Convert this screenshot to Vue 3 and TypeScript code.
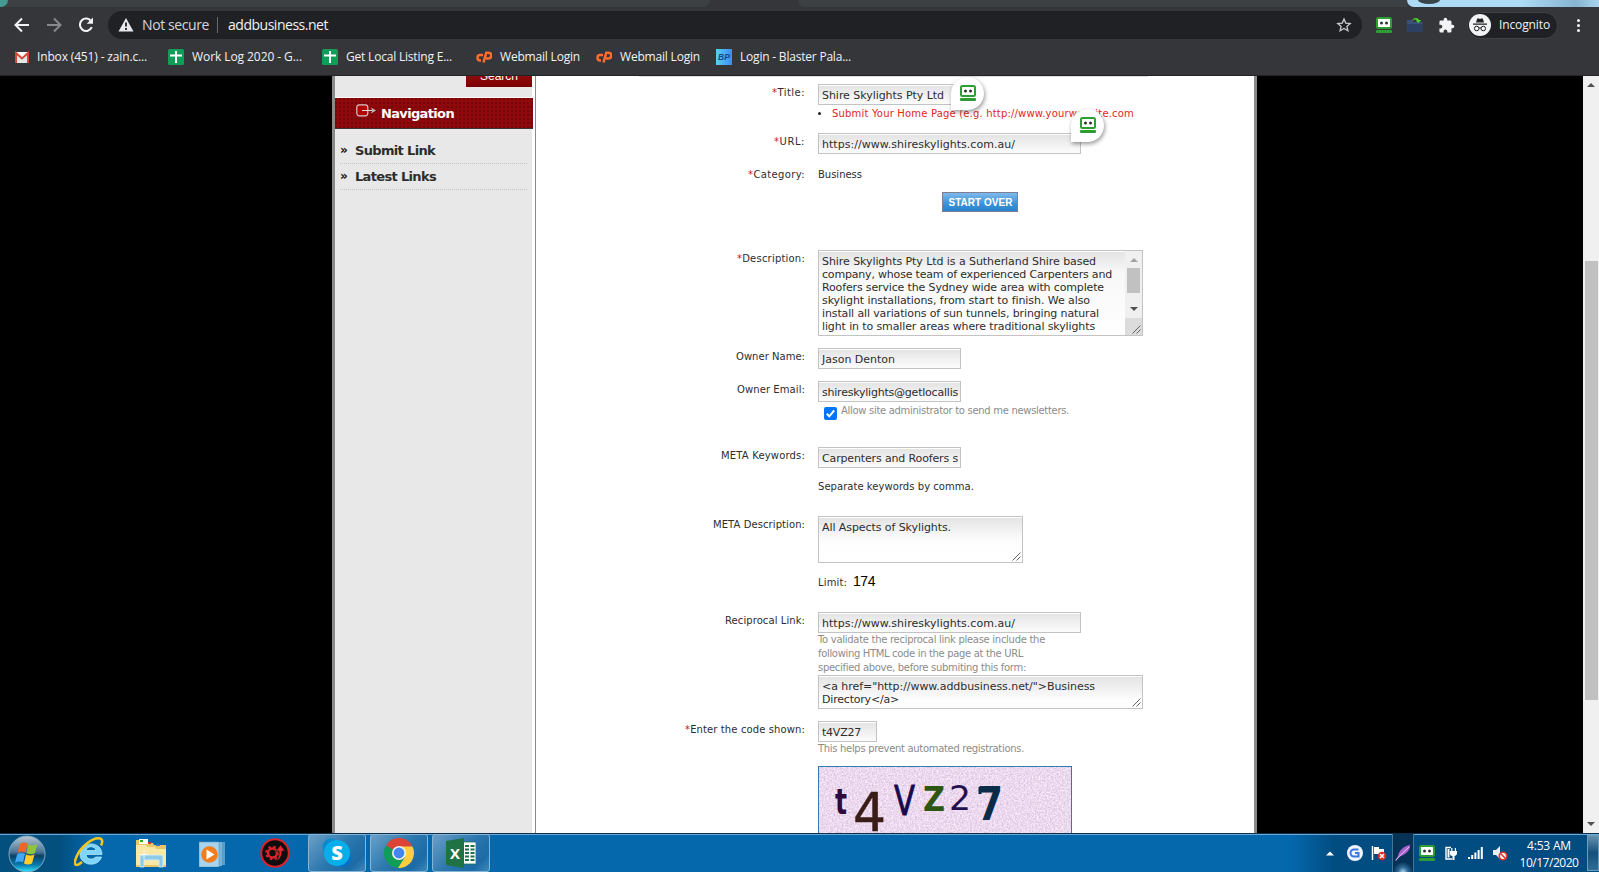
<script setup lang="ts">
import type { Directive } from 'vue'

// Spreads a line of text over a given width by adjusting its tracking.
const vFit: Directive<HTMLElement, number> = {
  mounted(el, { value }) {
    const count = (el.textContent ?? '').length
    const width = el.getBoundingClientRect().width
    if (count > 1 && value) el.style.letterSpacing = `${(value - width) / count}px`
  },
}

interface Bookmark { kind: string; text: string; fit: number }
const bookmarks: Bookmark[] = [
  { kind: 'gmail', text: 'Inbox (451) - zain.c...', fit: 110 },
  { kind: 'sheet', text: 'Work Log 2020 - G...', fit: 110 },
  { kind: 'sheet', text: 'Get Local Listing E...', fit: 106 },
  { kind: 'cp', text: 'Webmail Login', fit: 80 },
  { kind: 'cp', text: 'Webmail Login', fit: 80 },
  { kind: 'bp', text: 'Login - Blaster Pala...', fit: 111 },
]

interface Line { text: string; fit: number }
const description: Line[] = [
  { text: 'Shire Skylights Pty Ltd is a Sutherland Shire based', fit: 274 },
  { text: 'company, whose team of experienced Carpenters and', fit: 290 },
  { text: 'Roofers service the Sydney wide area with complete', fit: 282 },
  { text: 'skylight installations, from start to finish. We also', fit: 268 },
  { text: 'install all variations of sun tunnels, bringing natural', fit: 277 },
  { text: 'light in to smaller areas where traditional skylights', fit: 273 },
  { text: 'can be a hidden cost and reach the choice of double', fit: 284 },
]
const hints: Line[] = [
  { text: 'To validate the reciprocal link please include the', fit: 227 },
  { text: 'following HTML code in the page at the URL', fit: 205 },
  { text: 'specified above, before submiting this form:', fit: 208 },
]
const code: Line[] = [
  { text: '<a href="http://www.addbusiness.net/">Business', fit: 273 },
  { text: 'Directory</a>', fit: 77 },
]
</script>

<template>
  <div class="screen">
    <svg class="defs" width="0" height="0">
      <symbol id="robo" viewBox="0 0 16 16">
        <rect x="1" y="1" width="14" height="10" rx="1.5" fill="#fff" stroke="#2f9e32" stroke-width="2" />
        <circle cx="5.5" cy="6" r="1.5" fill="#333" /><circle cx="10.5" cy="6" r="1.5" fill="#333" />
        <rect x="0" y="13" width="16" height="3" rx="1" fill="#2f9e32" />
      </symbol>
      <symbol id="grip" viewBox="0 0 9 9">
        <path d="M.5 8.500 8.500.5M4.500 8.500l4-4" stroke="#555" fill="none" stroke-width=".9" />
      </symbol>
    </svg>

    <header class="browser">
      <div class="tabs">
        <div class="group left"><i class="teal" /></div>
        <div class="group mid" />
        <div class="glass"><i class="knob" /></div>
      </div>
      <div class="toolbar">
        <svg class="nav" viewBox="0 0 108 28" width="108" height="28">
          <path d="M29 14H16M22 7.500 15.500 14l6.500 6.500" stroke="#f1f3f4" stroke-width="2" fill="none" />
          <path d="M47 14h13M54 7.500 60.500 14 54 20.500" stroke="#88898c" stroke-width="2" fill="none" />
          <path d="M91.300 10.300A6.200 6.200 0 1 0 91.800 16.200" stroke="#f1f3f4" stroke-width="2.100" fill="none" />
          <path d="M93 6.500v6.300h-6.300z" fill="#f1f3f4" />
        </svg>
        <div class="omnibox">
          <svg class="warn" viewBox="0 0 16 14" width="16" height="14">
            <path d="M8 0 15.500 13.500H.5z" fill="#e8eaed" /><path d="M8 4.500v4M8 10v2" stroke="#202124" stroke-width="1.800" />
          </svg>
          <span class="secure"><span v-fit="67">Not secure</span></span>
          <i class="bar" />
          <span class="address"><span v-fit="100">addbusiness.net</span></span>
          <svg class="star" viewBox="0 0 16 16" width="16" height="16">
            <path d="M8 2l1.800 4.100 4.400.4-3.300 2.900 1 4.300L8 11.400l-3.900 2.300 1-4.300L1.800 6.500l4.400-.4z" stroke="#c9cacd" stroke-width="1.300" fill="none" />
          </svg>
        </div>
        <svg class="ext robo" width="16" height="16"><use href="#robo" /></svg>
        <svg class="ext" viewBox="0 0 16 16" width="16" height="16">
          <path d="M0 3h5l1 2h9.500v10H.5z" fill="#3b5078" /><path d="M.5 7h15v8H.5z" fill="#2d3f63" />
          <path d="M4.500 4.500C6 0 11 0 12 3h2.300L11.500 6 8.500 3.500H10C9 2 6.500 2.200 4.500 4.500z" fill="#4fd130" />
        </svg>
        <svg class="ext" viewBox="0 0 24 24" width="17" height="17">
          <path fill="#f1f3f4" d="M20.500 11H19V7a2 2 0 0 0-2-2h-4V3.500a2.500 2.500 0 0 0-5 0V5H4a2 2 0 0 0-2 2v3.800h1.500a2.700 2.700 0 0 1 0 5.400H2V20a2 2 0 0 0 2 2h3.800v-1.500a2.700 2.700 0 0 1 5.400 0V22H17a2 2 0 0 0 2-2v-4h1.500a2.500 2.500 0 0 0 0-5z" />
        </svg>
        <div class="profile">
          <svg viewBox="0 0 22 22" width="22" height="22">
            <circle cx="11" cy="11" r="11" fill="#f1f3f4" />
            <path d="M7 8.500 8.200 4.500h1.600l1.200.5 1.200-.5h1.600L15 8.500zM4 9.500h14v1.200H4z" fill="#202124" />
            <circle cx="7.700" cy="14.500" r="2.300" fill="none" stroke="#202124" /><circle cx="14.300" cy="14.500" r="2.300" fill="none" stroke="#202124" />
            <path d="M10 14.200q1-.8 2 0" stroke="#202124" fill="none" />
          </svg>
          <span class="who"><span v-fit="51">Incognito</span></span>
        </div>
        <div class="dots"><i /><i /><i /></div>
      </div>
      <nav class="bookmarks">
        <div v-for="(b, i) in bookmarks" :key="i" :class="['bookmark', 'b' + i]">
          <svg v-if="b.kind === 'gmail'" viewBox="0 0 16 16" width="16" height="16">
            <path d="M1 3h14v11H1z" fill="#e6e6e6" /><path d="M1 3h14L8 9z" fill="#fff" /><path d="M2 14V4l6 5.500L14 4v10" fill="none" stroke="#db4437" stroke-width="2" />
          </svg>
          <svg v-else-if="b.kind === 'sheet'" viewBox="0 0 16 16" width="16" height="16">
            <rect width="16" height="16" rx="1.500" fill="#0f9d58" /><path d="M2 6.500h12M8 2v12" stroke="#fff" stroke-width="2" />
          </svg>
          <svg v-else-if="b.kind === 'cp'" viewBox="0 0 16 16" width="16" height="16">
            <path d="M7 6H4.200a2.700 2.700 0 0 0 0 5.400H5M7.500 13.500l2.700-9.700h2.300a2.500 2.500 0 0 1 0 5.600H10" fill="none" stroke="#ff6c2c" stroke-width="2.500" />
          </svg>
          <svg v-else viewBox="0 0 16 16" width="16" height="16">
            <linearGradient id="bpg"><stop stop-color="#59d0ee" /><stop offset="1" stop-color="#3c8ef5" /></linearGradient>
            <rect width="16" height="16" fill="url(#bpg)" />
            <text x="8" y="11" text-anchor="middle" font-family="Liberation Sans" font-size="8.500" font-weight="700" font-style="italic" fill="#164a86">BP</text>
          </svg>
          <span class="cap"><span v-fit="b.fit">{{ b.text }}</span></span>
        </div>
      </nav>
    </header>

    <div class="viewport">
      <div class="site">
        <aside class="side">
          <div class="search-row"><div class="search"><span>Search</span></div></div>
          <div class="nav-head">
            <svg viewBox="0 0 21 13" width="21" height="13">
              <rect x=".8" y=".8" width="11" height="11" rx="2.500" fill="#b30000" stroke="#d8c8c8" stroke-width="1.200" />
              <path d="M6 6.500h10" stroke="#ddd" /><path d="M15 3.500l5 3-5 3 1.300-3z" fill="#bbb" />
            </svg>
            <span v-fit="73">Navigation</span>
          </div>
          <div class="links">
            <div class="link"><b>»</b><span v-fit="80">Submit Link</span></div>
            <div class="link"><b>»</b><span v-fit="81">Latest Links</span></div>
          </div>
        </aside>

        <main class="form">
          <div class="row r-title">
            <label><span v-fit="33"><em>*</em>Title:</span></label>
            <div class="field">
              <div class="box w143"><span v-fit="122">Shire Skylights Pty Ltd</span></div>
              <div class="error"><i /><span v-fit="302">Submit Your Home Page (e.g. http://www.yourwebsite.com</span></div>
            </div>
          </div>
          <div class="row r-url">
            <label><span v-fit="31"><em>*</em>URL:</span></label>
            <div class="field"><div class="box w263"><span v-fit="193">https://www.shireskylights.com.au/</span></div></div>
          </div>
          <div class="row r-category">
            <label><span v-fit="57"><em>*</em>Category:</span></label>
            <div class="field">
              <div class="plain cat"><span v-fit="44">Business</span></div>
              <div class="start"><span v-fit="64">START OVER</span></div>
            </div>
          </div>
          <div class="row r-description">
            <label><span v-fit="68"><em>*</em>Description:</span></label>
            <div class="field">
              <div class="area long">
                <div class="lines"><div v-for="l in description" :key="l.text"><span v-fit="l.fit">{{ l.text }}</span></div></div>
                <div class="mini">
                  <i class="up" /><i class="thumb" /><i class="down" />
                  <div class="corner"><svg width="9" height="9"><use href="#grip" /></svg></div>
                </div>
              </div>
            </div>
          </div>
          <div class="row r-owner">
            <label><span v-fit="69">Owner Name:</span></label>
            <div class="field"><div class="box w143"><span v-fit="73">Jason Denton</span></div></div>
          </div>
          <div class="row r-email">
            <label><span v-fit="68">Owner Email:</span></label>
            <div class="field">
              <div class="box w143"><span v-fit="136">shireskylights@getlocallis</span></div>
              <div class="allow">
                <svg viewBox="0 0 13 13" width="13" height="13"><rect width="13" height="13" rx="2" fill="#0075ff" /><path d="M2.800 6.800 5.300 9.300 10.200 3.300" fill="none" stroke="#fff" stroke-width="2" /></svg>
                <span v-fit="228">Allow site administrator to send me newsletters.</span>
              </div>
            </div>
          </div>
          <div class="row r-keywords">
            <label><span v-fit="84">META Keywords:</span></label>
            <div class="field">
              <div class="box w143"><span v-fit="136">Carpenters and Roofers s</span></div>
              <div class="plain sep"><span v-fit="156">Separate keywords by comma.</span></div>
            </div>
          </div>
          <div class="row r-meta">
            <label><span v-fit="92">META Description:</span></label>
            <div class="field">
              <div class="area short">
                <div class="lines"><span v-fit="129">All Aspects of Skylights.</span></div>
                <svg class="grip" width="9" height="9"><use href="#grip" /></svg>
              </div>
              <div class="limit"><span v-fit="29">Limit:</span><strong v-fit="22">174</strong></div>
            </div>
          </div>
          <div class="row r-reciprocal">
            <label><span v-fit="80">Reciprocal Link:</span></label>
            <div class="field">
              <div class="box w263"><span v-fit="193">https://www.shireskylights.com.au/</span></div>
              <div class="hint"><div v-for="h in hints" :key="h.text"><span v-fit="h.fit">{{ h.text }}</span></div></div>
              <div class="area code">
                <div class="lines"><div v-for="c in code" :key="c.text"><span v-fit="c.fit">{{ c.text }}</span></div></div>
                <svg class="grip" width="9" height="9"><use href="#grip" /></svg>
              </div>
            </div>
          </div>
          <div class="row r-code">
            <label><span v-fit="120"><em>*</em>Enter the code shown:</span></label>
            <div class="field">
              <div class="box w59"><span v-fit="39">t4VZ27</span></div>
              <div class="hint one"><span v-fit="206">This helps prevent automated registrations.</span></div>
              <div class="captcha">
                <svg viewBox="0 0 252 70" width="252" height="70">
                  <filter id="noise" x="0" y="0" width="100%" height="100%" color-interpolation-filters="sRGB">
                    <feTurbulence type="fractalNoise" baseFrequency=".6" numOctaves="2" seed="4" />
                    <feColorMatrix values="0.26 0 0 0 .795  0.32 0 0 0 .69  0.26 0 0 0 .805  0 0 0 0 1" />
                  </filter>
                  <rect width="252" height="70" filter="url(#noise)" />
                  <g font-family="DejaVu Sans">
                    <text x="16" y="47" font-size="36" font-weight="700" textLength="12" lengthAdjust="spacingAndGlyphs" fill="#2d0b3d">t</text>
                    <text x="34" y="64" font-size="53" textLength="33" lengthAdjust="spacingAndGlyphs" fill="#3a1c16" stroke="#3a1c16" stroke-width=".5">4</text>
                    <text x="75" y="48" font-size="41" textLength="21" lengthAdjust="spacingAndGlyphs" fill="#170a4e" stroke="#170a4e" stroke-width=".9">V</text>
                    <text x="104" y="44" font-size="34" font-weight="700" textLength="22" lengthAdjust="spacingAndGlyphs" fill="#2c5612">Z</text>
                    <text x="130" y="43" font-size="33" textLength="22" lengthAdjust="spacingAndGlyphs" fill="#25104f">2</text>
                    <text x="158" y="53" font-size="46" font-weight="700" textLength="26" lengthAdjust="spacingAndGlyphs" fill="#0a2c48">7</text>
                  </g>
                  <path d="M161 20v7" stroke="#0a2c48" stroke-width="3" />
                </svg>
              </div>
            </div>
          </div>
          <div class="bubble one"><svg width="16" height="16"><use href="#robo" /></svg></div>
          <div class="bubble two"><svg width="16" height="16"><use href="#robo" /></svg></div>
        </main>
      </div>
      <div class="scroll"><i class="up" /><i class="thumb" /><i class="down" /></div>
    </div>

    <footer class="taskbar">
      <svg class="orb" viewBox="0 0 38 38" width="38" height="38">
        <defs>
          <linearGradient id="orb" x2="0" y2="1"><stop stop-color="#b5c6d2" /><stop offset=".45" stop-color="#4a7594" /><stop offset=".55" stop-color="#0a4168" /><stop offset=".8" stop-color="#0879ad" /><stop offset="1" stop-color="#30e8ff" /></linearGradient>
        </defs>
        <circle cx="19" cy="19" r="18" fill="url(#orb)" stroke="#82a8c2" stroke-width="1" />
        <path d="M12 9q4-2.500 7.500-.5l-2 9q-4-2-8 .5z" fill="#f26522" /><path d="M20.500 9.500q4 2 9-.5l-2.500 9q-4 2.500-8.500 0z" fill="#8cc63f" />
        <path d="M9 19.500q4-2.500 8-.5l-2 8.500q-4-2-8 .5z" fill="#3fa9f5" /><path d="M18 19.500q4 2 8.500 0l-2.500 9q-4 2-8 0z" fill="#ffcb2d" />
      </svg>
      <svg class="ie" viewBox="0 0 30 30" width="30" height="30">
        <path d="M28 17.500H12c.5 5.500 7.500 5.500 9.500 2.500h6C24 31 6 29 6 17 6 4 28 3 28 17.500zM12 13.500h10c-1-5-9-5-10 0z" fill="#7fd5fa" stroke="#b9ecff" stroke-width=".7" />
        <path d="M8 25C2 30-1 28.500 2 21 6 10 19 0 26 1.500c3 .8 2.500 4 1 7" fill="none" stroke="#f5c51c" stroke-width="2.500" />
      </svg>
      <svg class="folder" viewBox="0 0 32 30" width="32" height="30">
        <path d="M1 2h8l1 3h8l1 2h12v22H1z" fill="#e8c768" /><path d="M4 1h9v5H4z" fill="#fff" /><path d="M5 2h3v2H5z" fill="#20b030" /><path d="M13 4h3v2h-3z" fill="#d03020" /><path d="M21 6h4v2h-4z" fill="#2a78c8" />
        <path d="M1 7h10l1 2h8l1 2h10v16H1z" fill="#f8e7a5" />
        <path d="M5 29V19q0-2 2-2h19q2 0 2 2v10h-4v-7H9v7z" fill="#8ecbe8" stroke="#d9f2ff" stroke-width=".8" /><path d="M9 12v9M5 16.500h8" stroke="#fff" opacity=".8" />
      </svg>
      <svg class="wmp" viewBox="0 0 26 26" width="26" height="26">
        <path d="M8 1h18v23H8z" fill="#5a9fc9" /><path d="M4 1h19v24H4z" fill="#79b4d8" /><path d="M0 1h20v25H0z" fill="#a9d3ec" stroke="#5d9fc8" stroke-width=".6" />
        <circle cx="10.500" cy="13.500" r="8.300" fill="#f27d1c" /><path d="M7.500 8.500v10l8-5z" fill="#fff" />
      </svg>
      <svg class="gear" viewBox="0 0 30 30" width="30" height="30">
        <circle cx="15" cy="15" r="13.800" fill="#100d0e" stroke="#d9222a" stroke-width="2" />
        <circle cx="12.500" cy="15" r="4.500" fill="none" stroke="#d9222a" stroke-width="2.500" />
        <circle cx="12.500" cy="15" r="6.300" fill="none" stroke="#d9222a" stroke-width="2" stroke-dasharray="2.500 2.450" />
        <path d="M13 23q7-1 6-10h-3l4.500-6 4.500 6h-3q0 10-9 10z" fill="#e12a32" stroke="#100d0e" stroke-width=".6" />
      </svg>
      <div class="app skype">
        <svg viewBox="0 0 30 30" width="30" height="30">
          <circle cx="9" cy="9" r="8.500" fill="#0a89cf" /><circle cx="21" cy="21" r="8.500" fill="#0a6fc0" /><circle cx="15" cy="15" r="13" fill="#08aeea" />
          <text x="15" y="22" text-anchor="middle" font-family="Open Sans" font-size="20" font-weight="800" fill="#fff">S</text>
        </svg>
      </div>
      <div class="app">
        <svg viewBox="0 0 30 30" width="30" height="30">
          <path d="M15 15 2 7.500A15 15 0 0 1 28 7.500z" fill="#db4437" /><path d="M15 15 2 7.500A15 15 0 0 0 14 30l7-11z" fill="#0f9d58" /><path d="M15 15l6 4-7 11A15 15 0 0 0 28.500 8.500H15z" fill="#ffcd40" />
          <circle cx="15" cy="15" r="7" fill="#f1f1f1" /><circle cx="15" cy="15" r="5.400" fill="#4285f4" />
        </svg>
      </div>
      <div class="app">
        <svg viewBox="0 0 30 30" width="30" height="30">
          <path d="M16 4h14v22H16z" fill="#fff" stroke="#1f7244" stroke-width=".8" /><path d="M19 8h4M19 11.500h4M19 15h4M19 18.500h4M19 22h4M24.500 8h4M24.500 11.500h4M24.500 15h4M24.500 18.500h4M24.500 22h4" stroke="#1f7244" stroke-width="1.800" />
          <path d="M0 3 18 0v30L0 27z" fill="#1f7244" /><text x="9" y="20.500" text-anchor="middle" font-family="Open Sans" font-size="15" font-weight="700" fill="#fff">X</text>
        </svg>
      </div>
      <div class="tray">
        <svg width="8" height="5" class="t-arrow"><path d="M0 4.500 4 .5l4 4z" fill="#fff" /></svg>
        <svg class="t-g" viewBox="0 0 16 16" width="16" height="16"><circle cx="8" cy="8" r="8" fill="#f1f5ff" /><path d="M11.500 4.500H7a3.200 3.200 0 0 0 0 7h4.500V8H8" stroke="#3878e0" stroke-width="2" fill="none" /></svg>
        <svg class="t-flag" viewBox="0 0 16 16" width="16" height="16"><path d="M1.500 1v14" stroke="#fff" stroke-width="1.500" /><path d="M3 2h5v2h5v7H8V9H3z" fill="#fff" /><circle cx="11" cy="11" r="4.300" fill="#d82c20" /><path d="M9 9l4 4M13 9l-4 4" stroke="#fff" stroke-width="1.500" /></svg>
        <div class="feather"><svg viewBox="0 0 16 18" width="16" height="18"><path d="M0 17 3 12C4 6 9 2 15 1c1 5-5 10-11 12l-3 4z" fill="#a861cd" /><path d="M1 16Q7 9 14 3" stroke="#e9c5f7" fill="none" /></svg></div>
        <svg class="t-robo" width="16" height="16"><use href="#robo" /></svg>
        <svg class="t-plug" viewBox="0 0 14 15" width="14" height="15"><path d="M7 1.500H2V13h6" fill="none" stroke="#fff" stroke-width="1.400" /><path d="M3.500 3h2v8.500h-2zM6 5h7v3q-1 2-2.500 2v4h-2v-4Q6 10 6 8zM7.200 2h1.200v3H7.200zM10.800 2H12v3h-1.200z" fill="#fff" /></svg>
        <svg class="t-signal" viewBox="0 0 15 12" width="15" height="12"><path d="M0 10h2v2H0zM3.200 8h2v4h-2zM6.400 5.500h2V12h-2zM9.600 3h2v9h-2zM12.800 0h2v12h-2z" fill="#fff" /></svg>
        <svg class="t-speaker" viewBox="0 0 16 15" width="16" height="15"><path d="M1 4h3l4-4v13L4 9H1z" fill="#e8eef2" /><circle cx="11" cy="10" r="3.700" fill="#fff" stroke="#e0352b" stroke-width="1.600" /><path d="M8.500 7.500l5 5" stroke="#e0352b" stroke-width="1.600" /></svg>
        <div class="clock"><div><span v-fit="44">4:53 AM</span></div><div><span v-fit="59">10/17/2020</span></div></div>
        <i class="peek" />
      </div>
    </footer>
  </div>
</template>

<style>
body { margin: 0; overflow: hidden; background: #000; }
</style>

<style scoped>
.screen { width: 1599px; height: 872px; display: flex; flex-direction: column; overflow: hidden; font-family: "DejaVu Sans", Verdana, sans-serif; color: #2d2d2d; }
.screen * { box-sizing: border-box; }
.defs { position: absolute; }
svg { display: block; flex: none; }
span, strong { white-space: pre; display: inline-block; }

.browser { height: 76px; flex: none; background: #35363a; border-bottom: 1px solid #232326; font-family: "Open Sans", "Noto Sans", sans-serif; color: #f1f3f4; }
.tabs { height: 7px; display: flex; overflow: hidden; }
.group { background: #3c4043; height: 7px; }
.left { width: 710px; border-bottom-right-radius: 7px; margin-right: 88px; }
.mid { width: 609px; border-bottom-left-radius: 7px; }
.teal { display: block; width: 8px; height: 7px; background: #459992; border-bottom-right-radius: 8px; }
.glass { flex: 1; background: linear-gradient(90deg, #addaf5 60%, #86b5d1 88%, #a9d4ee); border-bottom-left-radius: 7px; }
.knob { display: block; width: 22px; height: 4px; margin-left: 11px; background: #3a444b; border-radius: 0 0 11px 11px / 0 0 4px 4px; }
.toolbar { height: 36px; display: flex; align-items: center; }
.omnibox { width: 1254px; height: 28px; border-radius: 14px; background: #202124; display: flex; align-items: center; padding-left: 10px; }
.secure { width: 67px; margin-left: 8px; font-size: 14px; line-height: 28px; color: #d5d6d9; }
.bar { width: 1px; height: 16px; background: #66686c; margin: 0 10px 0 8px; }
.address { font-size: 14px; line-height: 28px; }
.star { margin-left: auto; margin-right: 10px; }
.ext { margin-left: 15px; }
.ext.robo { margin-left: 14px; }
.profile { margin-left: 12px; width: 91px; height: 27px; border: 1px solid #414246; background: #202124; border-radius: 14px; display: flex; align-items: center; padding-left: 1px; }
.profile .who { margin-left: 8px; font-size: 12px; margin-top: -2px; }
.dots { display: flex; flex-direction: column; gap: 2px; margin-left: 19px; }
.dots i { width: 3px; height: 3px; border-radius: 50%; background: #f1f3f4; }
.bookmarks { display: flex; height: 28px; align-items: center; padding-left: 14px; font-size: 12px; }
.bookmark { display: flex; gap: 8px; align-items: center; height: 28px; }
.cap { margin-top: -1px; }
.b0 { width: 154px; }
.b0 .cap { margin-left: -1px; }
.b1 { width: 154px; }
.b2 { width: 154px; }
.b3, .b4 { width: 120px; }

.viewport { height: 757px; flex: none; display: flex; background: #000; padding-left: 332px; overflow: hidden; }
.site { width: 925px; flex: none; border-left: 3px solid #8a8a8a; border-right: 3px solid #8a8a8a; display: flex; background: #fff; }
.side { width: 201px; flex: none; border-right: 1px solid #8a8a8a; background: linear-gradient(90deg, #e8e8e8 197px, #fff 197px); }
.search-row { height: 22px; border-bottom: 1px solid #fff; }
.search { height: 11px; width: 66px; margin-left: 131px; overflow: hidden; background: linear-gradient(#910a0c, #7a0000); color: #fff; text-align: center; font: 12px/16px "Liberation Sans", Arial, sans-serif; display: flex; justify-content: center; }
.search span { margin-top: -8px; }
.nav-head { width: 198px; height: 31px; border-bottom: 1px solid #3d3535; background: radial-gradient(circle at 1px 1px, #760709 .7px, transparent 1px) 0 0 / 4px 4px, #8f090c; display: flex; padding-left: 21px; color: #fff; font-weight: 700; font-size: 13px; line-height: 32px; gap: 4px; }
.nav-head svg { margin-top: 6px; }
.links { margin-left: 5px; width: 187px; padding-top: 9px; }
.link { height: 26px; border-bottom: 1px dotted #c4c4c4; display: flex; font-weight: 700; font-size: 13px; line-height: 25px; }
.link b { width: 15px; font-size: 12px; color: #111; line-height: 24px; }

.form { flex: 1; min-width: 0; position: relative; padding-top: 8px; background: linear-gradient(#dcdcdc, #dcdcdc) 103px 0 / 509px 1px no-repeat; }
.row { display: grid; grid-template-columns: 269px minmax(0, 1fr); column-gap: 13px; }
label { text-align: right; font-size: 10px; line-height: 12px; padding-top: 3px; }
em { font-style: normal; color: #c8201a; }
.r-title { height: 49px; }
.r-url { height: 33px; }
.r-category { height: 84px; }
.r-description { height: 98px; }
.r-owner { height: 33px; }
.r-email { height: 66px; }
.r-keywords { height: 69px; }
.r-meta { height: 96px; }
.r-reciprocal { height: 109px; }
.r-code { height: 120px; }
.box { height: 21px; border: 1px solid #c3c3c3; background: linear-gradient(#fff 1px, #e4e4e4 1px, #fff 21px); padding-left: 3px; font-size: 11px; line-height: 21px; overflow: hidden; }
.w143 { width: 143px; }
.w263 { width: 263px; }
.w59 { width: 59px; }
.error { display: flex; align-items: center; height: 14px; margin-top: 1px; font-size: 10px; color: #e0281c; }
.error i { width: 3px; height: 3px; border-radius: 50%; background: #222; margin-right: 11px; }
.plain { font-size: 10px; line-height: 12px; padding-top: 2px; height: 15px; }
.plain.cat { padding-top: 3px; }
.start { width: 76px; height: 20px; margin: 11px 0 0 124px; border: 1px solid #7c7f91; background: linear-gradient(#7fb9ec, #3b93d8 60%, #2583ce); color: #fff; font: 700 10px/19px "Liberation Sans", Arial, sans-serif; text-align: center; padding-left: 1px; }
.area { position: relative; border: 1px solid #c3c3c3; background: linear-gradient(#fff 1px, #e4e4e4 1px, #fdfdfd 24px, #fff); font-size: 11px; line-height: 13px; overflow: hidden; display: flex; }
.long { width: 325px; height: 86px; background: linear-gradient(#fff 1px, #e4e4e4 1px, #f7f7f7 20px, #fff); }
.short { width: 205px; height: 47px; }
.code { width: 325px; height: 34px; }
.lines { flex: 1; padding: 4px 0 0 3px; height: 100px; }
.lines div { height: 13px; }
.mini { width: 17px; background: #f0f0f0; display: flex; flex-direction: column; align-items: center; }
.up, .down { width: 0; height: 0; border: 4px solid transparent; flex: none; }
.up { border-top: 0; border-bottom-color: #505050; }
.down { border-bottom: 0; border-top-color: #505050; }
.mini .up { margin-top: 7px; border-bottom-color: #a3a3a3; }
.mini .thumb { width: 13px; height: 25px; margin-top: 6px; background: #c1c1c1; }
.mini .down { margin-top: 14px; }
.corner { width: 17px; height: 17px; background: #dcdcdc; margin-top: auto; padding: 7px 0 0 7px; }
.grip { position: absolute; right: 1px; bottom: 1px; }
.allow { display: flex; padding-left: 6px; gap: 4px; font-size: 10px; line-height: 12px; color: #8c8c8c; margin-top: 3px; }
.allow svg { margin-top: 2px; }
.sep { margin-top: 11px; }
.limit { display: flex; margin-top: 11px; gap: 6px; font-size: 10px; line-height: 18px; }
.limit strong { font: 14px/15px "Liberation Sans", Arial, sans-serif; color: #000; }
.hint { font-size: 10px; color: #8c8c8c; line-height: 14px; height: 42px; }
.hint div { height: 14px; }
.hint.one { height: 24px; }
.captcha { width: 254px; height: 80px; border: 1px solid #2b7db3; }
.bubble { position: absolute; width: 33px; height: 33px; border-radius: 50% 50% 50% 0; background: #fff; box-shadow: 1px 2px 4px #0006; padding: 8px 0 0 9px; }
.bubble.one { left: 415px; top: 1px; }
.bubble.two { left: 535px; top: 33px; }

.scroll { width: 16px; margin-left: auto; background: #f0f0f0; display: flex; flex-direction: column; align-items: center; }
.scroll .up { margin-top: 7px; }
.scroll .thumb { width: 13px; height: 439px; margin-top: 174px; background: #c1c1c1; }
.scroll .down { margin-top: auto; margin-bottom: 7px; }

.taskbar { height: 39px; flex: none; border-top: 1px solid #0b2f4c; box-shadow: inset 0 1px #6fa8d4; background: linear-gradient(90deg, #03507f 0, #03507f 60px, #0568ad 95px, #0568ad 1290px, #014c80 1335px, #014c80); display: flex; align-items: center; padding-left: 8px; }
.orb { margin-top: 1px; }
.ie { margin-left: 28px; margin-top: -3px; }
.folder { margin-left: 31px; }
.wmp { margin-left: 32px; margin-top: 1px; }
.gear { margin-left: 35px; margin-right: 18px; }
.app { width: 58px; height: 38px; margin-right: 4px; border: 1px solid #86b4d4; border-radius: 3px; background: linear-gradient(135deg, #6b9fc6, #2b77ae 50%, #1c6ba6 80%, #3c88bb); display: flex; align-items: center; justify-content: center; }
.tray { margin-left: auto; display: flex; align-items: center; height: 38px; }
.t-arrow { margin-right: 13px; }
.t-g { margin-right: 8px; }
.t-flag { margin-right: 5px; }
.feather { width: 22px; height: 38px; border: solid #42779c; border-width: 0 1px; background: radial-gradient(circle at 50% 100%, #aed5ef 0, #2c6694 5px, #063355 10px); display: flex; align-items: center; justify-content: center; margin-right: 5px; }
.t-robo { margin-right: 9px; }
.t-plug { margin-right: 10px; }
.t-signal { margin-right: 9px; }
.t-speaker { margin-right: 11px; }
.clock { width: 60px; text-align: center; color: #fff; font: 12px/17px "Open Sans", "Noto Sans", sans-serif; margin-right: 8px; padding-top: 1px; }
.peek { width: 12px; height: 36px; border: 1px solid #6d9dbd; background: linear-gradient(#6690ad, #14507c 50%, #2f6d97); }
</style>
